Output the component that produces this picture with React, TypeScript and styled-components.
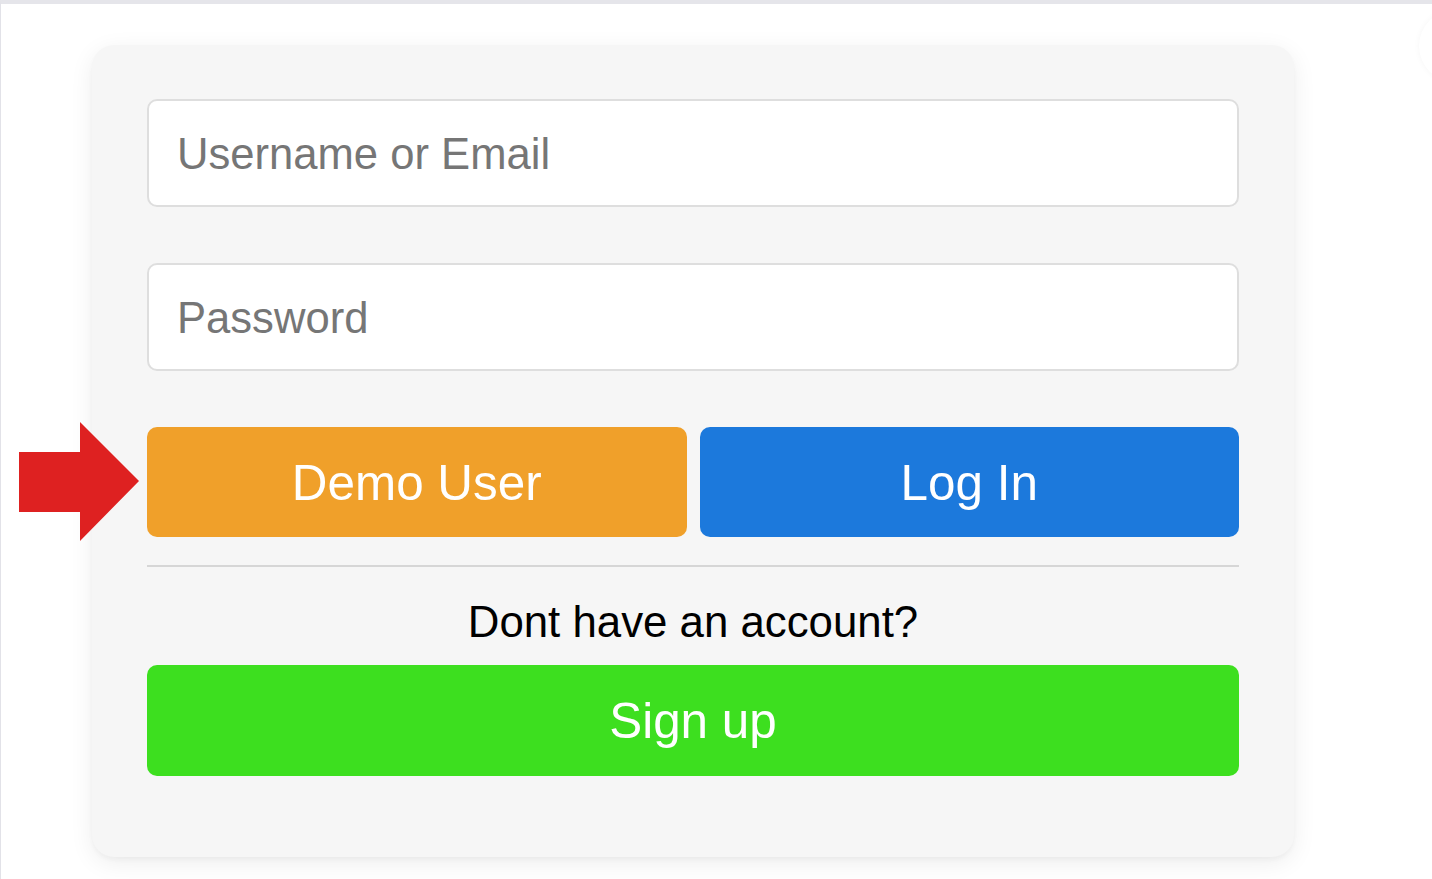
import React from 'react';
import styled, { createGlobalStyle } from 'styled-components';

const GlobalStyle = createGlobalStyle`
  html, body {
    margin: 0;
    padding: 0;
    background: #ffffff;
    font-family: "Liberation Sans", Arial, sans-serif;
  }
`;

const Page = styled.div`
  position: relative;
  box-sizing: border-box;
  width: 1432px;
  height: 879px;
  overflow: hidden;
  border-top: 4px solid #e5e5ea;
  border-left: 1px solid #e2e2e8;
  padding: 41px 0 0 91px;
`;

const Bubble = styled.div`
  position: absolute;
  top: 6px;
  left: 1418px;
  width: 72px;
  height: 72px;
  border-radius: 50%;
  background: #ffffff;
  box-shadow: 0 0 6px rgba(0, 0, 0, 0.04);
`;

const Card = styled.div`
  box-sizing: border-box;
  width: 1202px;
  padding: 54px 55px 81px 55px;
  background: #f6f6f6;
  border-radius: 22px;
  box-shadow: 0 3px 4px rgba(0, 0, 0, 0.03), 0 6px 24px rgba(0, 0, 0, 0.07);
  display: flex;
  flex-direction: column;
`;

const Input = styled.input`
  box-sizing: border-box;
  width: 100%;
  height: 108px;
  margin: 0 0 56px 0;
  padding: 3px 28px 0 28px;
  border: 2px solid #dedede;
  border-radius: 10px;
  background: #ffffff;
  font-family: "Liberation Sans", Arial, sans-serif;
  font-size: 43.6px;
  color: #333;
  outline: none;

  &::placeholder {
    color: #767676;
  }
`;

const ButtonRow = styled.div`
  position: relative;
  display: grid;
  grid-template-columns: 1fr 1fr;
  gap: 13px;
`;

const Button = styled.button<{ $bg: string }>`
  height: 110px;
  border: none;
  border-radius: 10px;
  background: ${(p) => p.$bg};
  color: #ffffff;
  font-family: "Liberation Sans", Arial, sans-serif;
  font-size: 49.4px;
  cursor: pointer;
`;

const SignUpButton = styled(Button)`
  height: 111px;
`;

const Arrow = styled.svg`
  position: absolute;
  top: -5px;
  right: calc(100% + 8px);
  width: 120px;
  height: 120px;
`;

const Divider = styled.hr`
  width: 100%;
  margin: 28px 0 0 0;
  border: none;
  border-top: 2px solid #d6d6d6;
`;

const Prompt = styled.p`
  margin: 30px 0 18px 0;
  text-align: center;
  font-size: 43.8px;
  line-height: 50px;
  color: #000000;
`;

export default function App() {
  return (
    <>
      <GlobalStyle />
      <Page>
        <Bubble />
        <Card>
          <Input type="text" placeholder="Username or Email" />
          <Input type="password" placeholder="Password" />
          <ButtonRow>
            <Arrow viewBox="0 0 120 120">
              <polygon points="0,30 61,30 61,0 120,59 61,119 61,90 0,90" fill="#de2121" />
            </Arrow>
            <Button $bg="#f0a02a">Demo User</Button>
            <Button $bg="#1c79dc">Log In</Button>
          </ButtonRow>
          <Divider />
          <Prompt>Dont have an account?</Prompt>
          <SignUpButton $bg="#3ddf1f">Sign up</SignUpButton>
        </Card>
      </Page>
    </>
  );
}
